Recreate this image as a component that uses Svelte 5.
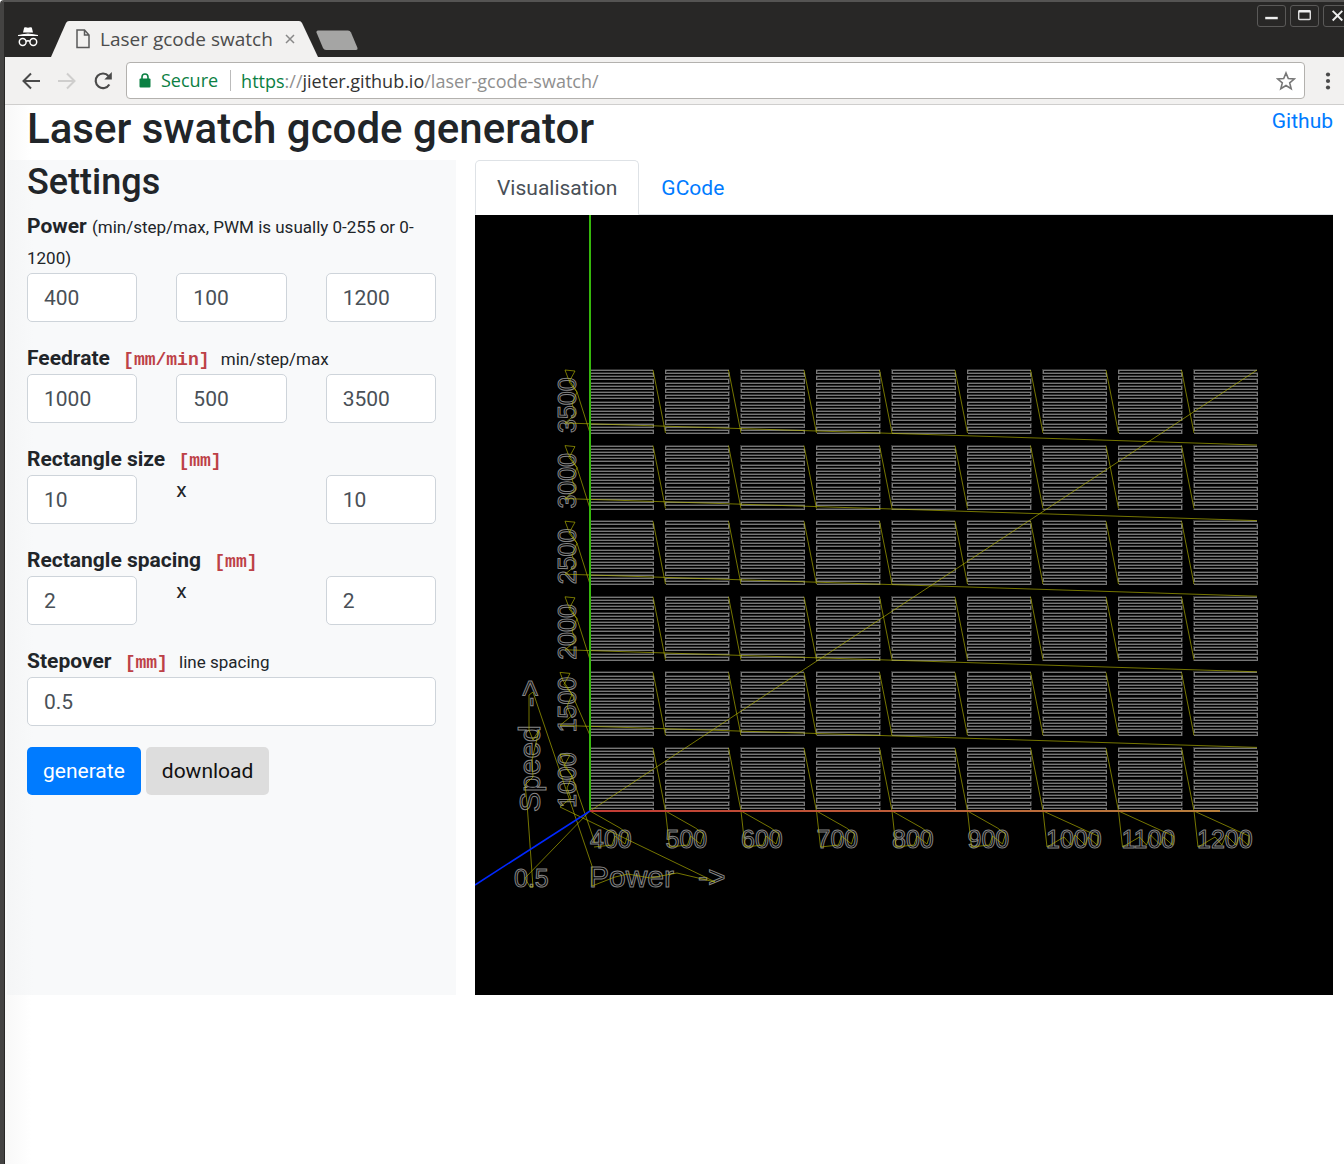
<script>
  const cols = [400, 500, 600, 700, 800, 900, 1000, 1100, 1200].map((power, i) => ({
    power,
    x: 115 + i * 75.5
  }));
  const rows = [1000, 1500, 2000, 2500, 3000, 3500].map((speed, i) => ({
    speed,
    y: 596 - i * 75.6
  }));
  const size = 63;
  const steps = 20;

  // one continuous back-and-forth engraving path, from the bottom edge up
  function hatch(x, y) {
    let d = `M${x} ${y}`;
    for (let i = 0; i <= steps; i++) {
      const ly = Math.round(y - (i * size) / steps);
      const [from, to] = i % 2 ? [x + size, x] : [x, x + size];
      d += `L${from} ${ly}L${to} ${ly}`;
    }
    return d;
  }

  // travel moves around the labels below each column
  function columnMoves({ x, power }, i) {
    const wide = power >= 1000;
    const start = i ? `M${x - 12.5} 533L${x} 596L${x + 4} 632` : `M${x + 4} 632`;
    const middle = wide ? 'l17 -10l7 8l4 -10l10 10l3 -8l9 8l1 -9l-9 -4' : 'l18 -2l3 -9l10 8l3 -10l-8 -6';
    return `${start}${middle}L${x} 596`;
  }

  // travel moves around the labels left of each row
  function rowMoves({ y }, i) {
    const start = i ? `M782 ${y + 12}L${i === 1 ? 85 : 90} ${y - 10}` : `M85 592`;
    const end = i ? `L115 ${y}` : 'L120 628';
    return `${start}l11 -9l-4 -10l5 -12l-9 -14l-3 -8l10 1l-6 11l8 10${end}`;
  }

  let power = $state({ min: '400', step: '100', max: '1200' });
  let feed = $state({ min: '1000', step: '500', max: '3500' });
  let rect = $state({ w: '10', h: '10' });
  let spacing = $state({ x: '2', y: '2' });
  let stepover = $state('0.5');
</script>

<div class="window">
  <header class="titlebar">
    <svg class="incognito" viewBox="0 0 22 22" aria-hidden="true">
      <path d="M6 6.500L7.200 1.500Q9 .8 11 1.800Q13 .8 14.800 1.500L16 6.500Z" fill="#fff" />
      <path d="M1 9.500Q11 6.500 21 9.500Z" fill="#fff" stroke="#fff" />
      <g fill="none" stroke="#fff" stroke-width="1.500">
        <circle cx="5.700" cy="16" r="3.400" /><circle cx="16.300" cy="16" r="3.400" /><path d="M9 15.500Q11 14 13 15.500" />
      </g>
    </svg>
    <div class="tab">
      <svg class="tab-shape" viewBox="0 0 268 37" preserveAspectRatio="none" aria-hidden="true">
        <path d="M0 37L15 2Q16 0 18 0H248Q250 0 251 2L267 37Z" fill="#f2f1f0" />
      </svg>
      <svg class="page-icon" viewBox="0 0 14 20" aria-hidden="true">
        <path d="M1 1H8.500L13 6V18.500H1ZM8.500 1V6H13" fill="none" stroke="#5a5a5a" stroke-width="1.500" />
      </svg>
      <span class="tab-title">Laser gcode swatch</span>
      <button class="tab-close" aria-label="Close tab">
        <svg viewBox="0 0 10 10"><path d="M1 1L9 9M9 1L1 9" stroke="#888" stroke-width="1.500" /></svg>
      </button>
    </div>
    <button class="new-tab" aria-label="New tab">
      <svg viewBox="0 0 44 21"><path d="M3 .5H33Q35 .5 36 2.500L42.500 18Q43 20 41 20H11Q9 20 8 18L1.500 2.500Q1 .5 3 .5Z" fill="#a5a5a4" /></svg>
    </button>
    <div class="controls">
      <button aria-label="Minimise"><svg viewBox="0 0 28 20"><path d="M7.500 12.500H20.500" stroke="#eee" stroke-width="2.500" /></svg></button>
      <button aria-label="Maximise"><svg viewBox="0 0 28 20"><rect x="8" y="5" width="12" height="9" rx="1" fill="none" stroke="#ddd" stroke-width="1.500" /><path d="M8 5.500H20" stroke="#eee" stroke-width="2.500" /></svg></button>
      <button aria-label="Close"><svg viewBox="0 0 28 20"><path d="M9 5L19 15M19 5L9 15" stroke="#eee" stroke-width="2" /></svg></button>
    </div>
  </header>

  <div class="body">
    <nav class="toolbar" aria-label="Browser">
      <button class="nav" aria-label="Back"><svg viewBox="0 0 20 20"><path d="M19 10H2.500M10 2.500L2.500 10L10 17.500" fill="none" stroke="#4a4a4a" stroke-width="2" /></svg></button>
      <button class="nav" aria-label="Forward"><svg viewBox="0 0 20 20"><path d="M1 10H17.500M10 2.500L17.500 10L10 17.500" fill="none" stroke="#cfcecd" stroke-width="2" /></svg></button>
      <button class="nav" aria-label="Reload"><svg viewBox="0 0 20 20"><path d="M16.300 13.500A7.300 7.300 0 1 1 15.500 5" fill="none" stroke="#4a4a4a" stroke-width="2.200" /><path d="M18.800 1V8.500H11.300Z" fill="#4a4a4a" /></svg></button>
      <div class="address">
        <svg class="lock" viewBox="0 0 12 15" aria-hidden="true"><path d="M3 6V4A3 3 0 0 1 9 4V6" fill="none" stroke="#0b8043" stroke-width="1.600" /><rect x=".5" y="5.500" width="11" height="9" rx="1" fill="#0b8043" /></svg>
        <span class="secure">Secure</span>
        <span class="url"><span class="scheme">https</span><span class="dim">://</span>jieter.github.io<span class="dim">/laser-gcode-swatch/</span></span>
        <button class="star" aria-label="Bookmark"><svg viewBox="0 0 20 20"><path d="M10 2L12.300 7.600L18.300 8L13.700 11.900L15.200 17.700L10 14.500L4.800 17.700L6.300 11.900L1.700 8L7.700 7.600Z" fill="none" stroke="#777" stroke-width="1.600" /></svg></button>
      </div>
      <button class="menu" aria-label="Menu"><svg viewBox="0 0 6 20"><g fill="#4a4a4a"><circle cx="3" cy="3.500" r="2.100" /><circle cx="3" cy="10" r="2.100" /><circle cx="3" cy="16.500" r="2.100" /></g></svg></button>
    </nav>

    <main>
      <div class="heading">
        <h1>Laser swatch gcode generator</h1>
        <a href="#github">Github</a>
      </div>
      <div class="columns">
        <form class="settings" onsubmit={(e) => e.preventDefault()}>
          <h2>Settings</h2>
          <div class="group">
            <label for="power"><b>Power</b> <small>(min/step/max, PWM is usually 0-255 or 0-1200)</small></label>
            <div class="fields">
              <input id="power" bind:value={power.min} />
              <input aria-label="Power step" bind:value={power.step} />
              <input aria-label="Power max" bind:value={power.max} />
            </div>
          </div>
          <div class="group">
            <label for="feed"><b>Feedrate <code>[mm/min]</code></b> <small>min/step/max</small></label>
            <div class="fields">
              <input id="feed" bind:value={feed.min} />
              <input aria-label="Feedrate step" bind:value={feed.step} />
              <input aria-label="Feedrate max" bind:value={feed.max} />
            </div>
          </div>
          <div class="group">
            <label for="rect"><b>Rectangle size <code>[mm]</code></b></label>
            <div class="fields">
              <input id="rect" bind:value={rect.w} />
              <span>x</span>
              <input aria-label="Rectangle height" bind:value={rect.h} />
            </div>
          </div>
          <div class="group">
            <label for="spacing"><b>Rectangle spacing <code>[mm]</code></b></label>
            <div class="fields">
              <input id="spacing" bind:value={spacing.x} />
              <span>x</span>
              <input aria-label="Vertical spacing" bind:value={spacing.y} />
            </div>
          </div>
          <div class="group">
            <label class="raised" for="stepover"><b>Stepover <code>[mm]</code></b> <small>line spacing</small></label>
            <input id="stepover" bind:value={stepover} />
          </div>
          <div class="actions">
            <button class="btn primary" type="submit">generate</button>
            <button class="btn" type="button">download</button>
          </div>
        </form>

        <section class="output">
          <div class="tabs">
            <a class="active" href="#visualisation">Visualisation</a>
            <a href="#gcode">GCode</a>
          </div>
          <svg class="plot" viewBox="0 0 858 780" role="img" aria-label="Toolpath preview">
            <rect width="858" height="780" fill="#000" />
            {#each ['glow', 'line'] as layer}
              <g class="cut {layer}">
                {#each rows as row}
                  {#each cols as col}
                    <path d={hatch(col.x, row.y)} />
                  {/each}
                {/each}
              </g>
            {/each}
            <g class="outline numbers">
              {#each cols as col}
                <text x={col.power >= 1000 ? col.x + 3 : col.x} y="633">{col.power}</text>
              {/each}
              {#each rows as row}
                <text transform="translate(101 {row.speed < 2000 ? row.y - 3 : row.y}) rotate(-90)">{row.speed}</text>
              {/each}
              <text x="39" y="672">0.5</text>
            </g>
            <g class="outline">
              <text x="114" y="672">Power</text>
              <text x="223" y="672">-&gt;</text>
              <text transform="translate(65 597) rotate(-90)">Speed</text>
              <text transform="translate(65 492) rotate(-90)">-&gt;</text>
            </g>
            <g class="travel">
              {#each cols as col, i}
                <path d={columnMoves(col, i)} />
              {/each}
              {#each rows as row, i}
                <path d={rowMoves(row, i)} />
                {#if i > 0}
                  {#each cols.slice(1) as col}
                    <path d="M{col.x - 12.5} {row.y - size}L{col.x} {row.y}" />
                  {/each}
                {/if}
              {/each}
              <path d="M782 155L115 596L50 663L55 672L58 672L52 588L50 570L58 562L57 545L64 515L58 525L54 515L54 480L58 477L117 651L117 671L140 662L153 659L175 663L202 658L240 667L230 662L85 592" />
            </g>
            <path d="M115 0V596" stroke="#36b80c" stroke-width="2" />
            <path d="M115 596H745" stroke="url(#xaxis)" stroke-width="2" />
            <path d="M115 596L0 670" stroke="#0028ff" stroke-width="1.500" />
            <defs>
              <linearGradient id="xaxis" gradientUnits="userSpaceOnUse" x1="115" y1="0" x2="745" y2="0">
                <stop offset="0" stop-color="#c23a34" />
                <stop offset="1" stop-color="#b8803c" />
              </linearGradient>
            </defs>
          </svg>
        </section>
      </div>
    </main>
  </div>
</div>

<style>
  :global(body) { background: #fff; }
  * { box-sizing: border-box; }
  button { font: inherit; border: 0; padding: 0; background: none; }
  svg { display: block; }
  a { color: #007bff; text-decoration: none; }

  .window {
    min-height: 100vh;
    display: flex;
    flex-direction: column;
    overflow: hidden;
    background: #282726;
    border-top: 2px solid #555453;
    border-left: 4px solid #444342;
    border-top-left-radius: 4px;
    font-family: Roboto, sans-serif;
    font-size: 21px;
    line-height: 31px;
    color: #212529;
  }
  .titlebar { display: flex; align-items: flex-end; height: 55px; padding-left: 13px; }
  .incognito { width: 22px; height: 22px; margin-bottom: 9px; }
  .tab {
    position: relative;
    display: flex;
    align-items: center;
    width: 268px;
    height: 36px;
    margin-left: 12px;
    padding: 0 24px 0 25px;
    font: 19px/24px "Open Sans", sans-serif;
    color: #4c4c4c;
  }
  .tab-shape { position: absolute; inset: 0; width: 100%; height: 100%; }
  .page-icon { position: relative; width: 14px; height: 20px; flex: none; }
  .tab-title { position: relative; margin-left: 10px; white-space: nowrap; }
  .tab-close { position: relative; margin-left: auto; width: 10px; height: 10px; }
  .new-tab { width: 44px; height: 21px; margin: 0 0 6px -4px; }
  .controls { display: flex; gap: 4px; align-self: flex-start; margin: 3px -8px 0 auto; }
  .controls button { width: 29px; height: 22px; border: 1px solid #5a5958; border-radius: 3px; }

  .body { flex: 1; display: flex; flex-direction: column; margin-left: 1px; background: #fff; }
  .toolbar {
    display: flex;
    align-items: center;
    height: 48px;
    padding: 0 13px 0 16px;
    background: #f2f1f0;
    border-bottom: 1px solid #cfcecd;
  }
  .nav { width: 20px; height: 20px; margin-right: 16px; }
  .address {
    flex: 1;
    display: flex;
    align-items: center;
    height: 37px;
    margin: 0 20px 0 -3px;
    padding: 0 8px 0 12px;
    background: #fff;
    border: 1px solid #b3b1ae;
    border-radius: 4px;
    font: 18px/24px "Open Sans", sans-serif;
  }
  .lock { width: 12px; height: 15px; }
  .secure { margin-left: 10px; padding-right: 12px; border-right: 1px solid #bbb; color: #0b8043; line-height: 21px; }
  .url { margin-left: 10px; color: #333; }
  .scheme { color: #0b8043; }
  .dim { color: #8f8f8f; }
  .star { width: 20px; height: 20px; margin-left: auto; }
  .menu { width: 6px; height: 20px; }

  main { flex: 1; padding: 0 11px 0 2px; background: linear-gradient(to right, #f8f8f8, #fff 26px); }
  .heading { display: flex; justify-content: space-between; padding-left: 20px; height: 55px; }
  .heading a { padding-top: 1px; }
  h1, h2 { margin: 0; font-weight: 500; }
  h1 { font-size: 42px; line-height: 48px; }
  h2 { font-size: 36px; line-height: 45px; margin-bottom: 6px; }
  .columns { display: grid; grid-template-columns: 449fr 858fr; gap: 19px; }
  .settings { padding: 0 20px; background: linear-gradient(to right, #f4f5f6, #f8f9fa 26px); }
  .group { margin-bottom: 21px; }
  label { display: block; }
  b { font-weight: 700; }
  small { font-size: 17px; line-height: 20px; }
  code {
    padding: 4px 6px 4px 8px;
    background: #f8f9fa;
    color: #bd4147;
    font: 18px/20px "Liberation Mono", monospace;
    font-weight: 700;
  }
  .raised { position: relative; }
  .fields { display: grid; grid-template-columns: repeat(3, 1fr); gap: 39px; }
  input {
    display: block;
    width: 100%;
    min-width: 0;
    height: 49px;
    padding: 0 16px;
    border: 1px solid #ced4da;
    border-radius: 5px;
    background: #fff;
    color: #495057;
    font: inherit;
  }
  .actions { display: flex; gap: 5px; }
  .btn { height: 48px; padding: 0 16px; border-radius: 5px; background: #ddd; color: #111; }
  .primary { background: #007bff; color: #fff; }

  .tabs { display: flex; height: 55px; border-bottom: 1px solid #dee2e6; }
  .tabs a { height: 55px; padding: 12px 21px 10px; border: 1px solid transparent; border-radius: 5px 5px 0 0; }
  .tabs .active { color: #495057; background: #fff; border-color: #dee2e6 #dee2e6 #fff; }
  .plot { width: 100%; height: auto; }
  .cut { fill: none; shape-rendering: crispEdges; }
  .glow { stroke: #303030; stroke-width: 2; }
  .line { stroke: #777; stroke-width: 1; }
  .travel { fill: none; stroke: #b4b400; stroke-opacity: 0.65; stroke-width: 1; }
  .outline { fill: none; stroke: #858585; stroke-width: 1; font: 30px "Liberation Sans", sans-serif; }
  .numbers { font-size: 25px; }
</style>
